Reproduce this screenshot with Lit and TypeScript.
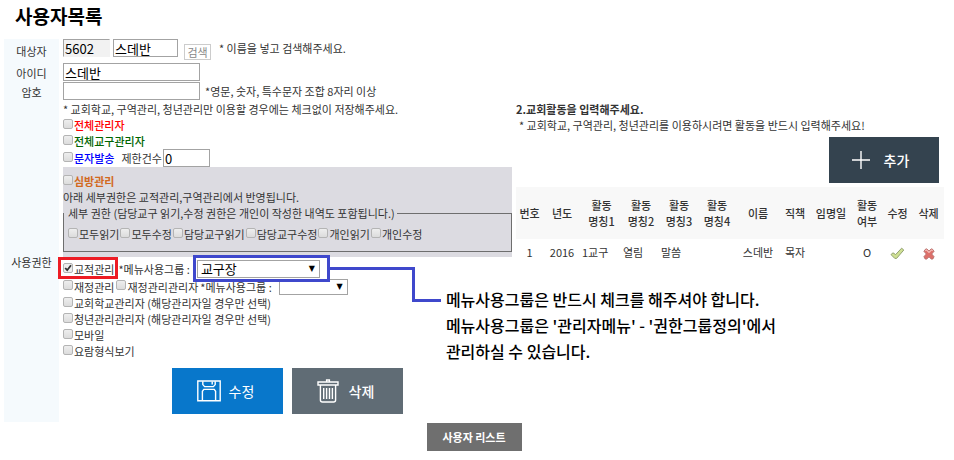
import { LitElement, html, css, svg, nothing } from "lit";
import { customElement } from "lit/decorators.js";

interface Column {
  lines: string[];
  share: number;
}

const COLUMNS: Column[] = [
  { lines: ["번호"], share: 27 },
  { lines: ["년도"], share: 38 },
  { lines: ["활동", "명칭1"], share: 41 },
  { lines: ["활동", "명칭2"], share: 38 },
  { lines: ["활동", "명칭3"], share: 38 },
  { lines: ["활동", "명칭4"], share: 38 },
  { lines: ["이름"], share: 44 },
  { lines: ["직책"], share: 30 },
  { lines: ["임명일"], share: 42 },
  { lines: ["활동", "여부"], share: 30 },
  { lines: ["수정"], share: 31 },
  { lines: ["삭제"], share: 31 },
];
const TOTAL = COLUMNS.reduce((sum, c) => sum + c.share, 0);

const ROWS = [
  { no: "1", year: "2016", acts: ["1교구", "열림", "말씀", ""], name: "스데반", role: "목자", date: "", active: "O" },
];

const DETAIL_RIGHTS = ["모두읽기", "모두수정", "담당교구읽기", "담당교구수정", "개인읽기", "개인수정"];

const saveIcon = svg`<svg width="24" height="22" viewBox="0 0 24 22" fill="none" stroke="#fff" stroke-width="1.4" aria-hidden="true">
  <path d="M.8 1H23.2V20.8H.8Z"/>
  <path d="M5.8 1.2V4.6L7.6 6.6H16.4L18.2 4.6V1.2M15.2 1.4V4.6"/>
  <path d="M5.4 20.6V11.2L6.8 9.4H17.2L18.6 11.2V20.6"/>
</svg>`;

const trashIcon = svg`<svg width="22" height="24" viewBox="0 0 22 24" fill="none" stroke="#fff" stroke-width="1.4" aria-hidden="true">
  <path d="M9.6 2.6V1H12.4V2.6M1 3H21V6H1Z"/>
  <path d="M3.4 6V21Q3.4 23 5.4 23H16.6Q18.6 23 18.6 21V6"/>
  <path d="M6.7 9V20M9.6 9V20M12.5 9V20M15.4 9V20"/>
</svg>`;

const plusIcon = svg`<svg width="20" height="20" viewBox="0 0 20 20" stroke="#fff" stroke-width="1.4" aria-hidden="true">
  <path d="M10 1V19M1 10H19"/>
</svg>`;

const checkIcon = svg`<svg width="15" height="13" viewBox="0 0 15 13" aria-hidden="true">
  <path d="M1 7.6 3 5.8 5.6 7.6 11.6 1.2 13.8 3 6.6 11.4H4.8Z" fill="#cfe093" stroke="#93a274" stroke-width="1"/>
</svg>`;

const crossIcon = svg`<svg width="12" height="12" viewBox="0 0 13 13" aria-hidden="true">
  <path d="M1 3.6 3 1H4.2L6.5 3.2 8.8 1H10L12 3.6 9.4 6.5 12 9.4 10.6 12H9L6.5 9.6 4 12H2.4L1 9.4 3.6 6.5Z" fill="#de6f69" stroke="#b5706c" stroke-width="1"/>
  <path d="M2.4 3 3.8 2.2 6.5 4.8 9.2 2.2 10.6 3" fill="none" stroke="#f3bab5" stroke-width="1.2"/>
</svg>`;

@customElement("app-root")
export class AppRoot extends LitElement {
  static styles = css`
    :host {
      display: block;
      padding: 4px 10px 8px 4px;
      background: #fff;
      color: #333;
      font: 11px/16px "Noto Sans CJK KR", "Noto Sans", sans-serif;
    }
    * { box-sizing: border-box; }
    h1 {
      margin: 0 0 11px 11px;
      color: #000;
      font-size: 19px;
      line-height: 24px;
      font-weight: 700;
    }
    h2, p { margin: 0; font-size: 11px; line-height: 16px; }
    button, input, select { font-family: inherit; margin: 0; }
    button { cursor: pointer; }

    .form {
      display: grid;
      grid-template-columns: 55px minmax(0, 1fr);
      column-gap: 4px;
    }
    .label {
      display: flex;
      align-items: center;
      justify-content: center;
      background: #f5fafd;
    }
    .field { display: flex; align-items: flex-start; padding-bottom: 1px; }
    .target { padding-bottom: 3px; height: 24px; }
    .target .note { margin-left: 8px; }
    .note { margin-left: 5px; line-height: 18px; }
    input.text {
      height: 18px;
      padding: 0 0 0 1px;
      border: 1px solid #a3a3a3;
      border-radius: 0;
      background: #fff;
      color: #000;
      font-size: 13px;
      line-height: 16px;
    }
    .num { width: 47px; }
    .name { width: 65px; margin-left: 3px; }
    .wide { width: 137px; }
    input.locked { background: #f2f2f2; border-right-color: #f2f2f2; border-bottom-color: #f2f2f2; }
    .search {
      width: 27px;
      height: 16px;
      margin: 5px 0 0 6px;
      padding: 0;
      border: 1px solid #ccc;
      background: #fff;
      color: #888;
      font-size: 11px;
      line-height: 14px;
    }

    .split {
      display: grid;
      grid-template-columns: minmax(0, 449fr) minmax(0, 428fr);
      column-gap: 4px;
      align-items: start;
      padding-bottom: 8px;
    }
    .line { display: flex; align-items: center; white-space: nowrap; }
    .check { display: flex; align-items: center; gap: 1px; }
    .check input {
      appearance: none;
      flex: none;
      width: 10px;
      height: 10px;
      margin-bottom: 3px;
      border: 1px solid #b4b4b4;
      border-radius: 2px;
      background: linear-gradient(#eee, #dcdcdc);
    }
    .check input:checked {
      background: url('data:image/svg+xml,<svg xmlns="http://www.w3.org/2000/svg" viewBox="0 0 8 8"><path d="M1.2 4 3.2 6.2 7 1.2" fill="none" stroke="%23333" stroke-width="1.8"/></svg>') center / 8px 8px, #eee;
    }
    .red { color: #f00; font-weight: 500; }
    .green { color: #006400; font-weight: 500; }
    .blue { color: #00f; font-weight: 500; }
    .orange { color: #d2691e; font-weight: 700; }
    .limit { display: flex; align-items: center; gap: 1px; margin-left: 7px; }

    .panel { padding: 6px 0 5px; background: #dcdbe1; }
    fieldset {
      min-width: 0;
      margin: 0;
      padding: 5px 0 9px;
      border: 1px solid #6e6e6e;
    }
    legend { padding: 0 2px 0 4px; }
    .rights { gap: 1px; padding-left: 4px; }

    .group { padding-top: 3px; gap: 4px; }
    .finance { gap: 2px; height: 17px; }
    .menu { display: flex; align-items: center; gap: 7px; }
    .pick { position: relative; display: flex; }
    .pick::after {
      content: "▼";
      position: absolute;
      right: 5px;
      top: 0;
      color: #000;
      font: 8px/18px "DejaVu Sans", sans-serif;
      pointer-events: none;
    }
    .pick select {
      appearance: none;
      width: 123px;
      height: 18px;
      padding: 0 3px;
      border: 1px solid #a3a3a3;
      border-radius: 0;
      background: #fff;
      color: #000;
      font-size: 13px;
      line-height: 16px;
    }
    .pick.small select { width: 69px; height: 16px; }
    .pick.small::after { line-height: 16px; }

    .marked { position: relative; }
    .marked::before {
      content: "";
      position: absolute;
      inset: -4px -4px -2px -5px;
      border: 3px solid #ed1c24;
    }
    .frame {
      position: absolute;
      z-index: 1;
      inset: -5px -10px -4px -4px;
      border: 3px solid #3f48cc;
      pointer-events: none;
    }
    .wire { position: absolute; left: 133px; top: 7px; }
    .callout {
      position: absolute;
      left: 249px;
      top: 26px;
      color: #000;
      font-size: 16px;
      line-height: 26px;
      font-weight: 500;
    }

    .actions { display: flex; justify-content: center; gap: 9px; margin-top: 9px; }
    .big {
      display: flex;
      align-items: center;
      justify-content: center;
      gap: 8px;
      width: 111px;
      height: 46px;
      padding: 0 4px 0 0;
      border: 0;
      color: #fff;
      font-size: 14px;
      line-height: 20px;
    }
    .save { background: #0877cb; }
    .delete { gap: 10px; background: #606c75; font-weight: 500; }
    .add { gap: 13px; width: 110px; padding-right: 8px; margin: 4px 5px 4px auto; background: #34434f; font-weight: 500; }
    .indent { padding-left: 3px; }

    table { width: 100%; border-collapse: collapse; table-layout: fixed; }
    th, td { padding: 0; text-align: center; white-space: nowrap; }
    th { height: 52px; background: #f8f8f8; font-weight: 500; }
    td { height: 26px; }
    td.act { text-align: left; padding-left: 1px; }
    .icon {
      display: inline-flex;
      padding: 0;
      border: 0;
      background: none;
      vertical-align: middle;
    }

    .footer { display: flex; justify-content: center; margin-top: 1px; }
    .list {
      width: 95px;
      height: 28px;
      padding: 0;
      border: 0;
      background: #6f6f6f;
      color: #fff;
      font-size: 11px;
      line-height: 16px;
      font-weight: 700;
    }
  `;

  private check(label: string, tone = "", checked = false) {
    return html`<label class="check"><input type="checkbox" ?checked=${checked}><span class=${tone || nothing}>${label}</span></label>`;
  }

  private permissions() {
    return html`
      <div>
        <p>* 교회학교, 구역관리, 청년관리만 이용할 경우에는 체크없이 저장해주세요.</p>
        <div class="line">${this.check("전체관리자", "red")}</div>
        <div class="line">${this.check("전체교구관리자", "green")}</div>
        <div class="line">
          ${this.check("문자발송", "blue")}
          <label class="limit">제한건수 <input class="text num" type="text" value="0"></label>
        </div>
        <div class="panel">
          <div class="line">${this.check("심방관리", "orange")}</div>
          <p>아래 세부권한은 교적관리,구역관리에서 반영됩니다.</p>
          <fieldset>
            <legend>세부 권한 (담당교구 읽기,수정 권한은 개인이 작성한 내역도 포함됩니다.)</legend>
            <div class="line rights">${DETAIL_RIGHTS.map((r) => this.check(r))}</div>
          </fieldset>
        </div>
        <div class="line group">
          <div class="marked">${this.check("교적관리", "", true)}</div>
          <div class="menu">
            <label for="menu-group">*메뉴사용그룹 :</label>
            <div class="pick">
              <select id="menu-group"><option>교구장</option></select>
              <div class="frame"></div>
              <svg class="wire" width="111" height="35" viewBox="0 0 111 35" fill="none" stroke="#3f48cc" stroke-width="3" aria-hidden="true">
                <path d="M0 1.5H83.5V33.5H111"/>
              </svg>
              <div class="callout">
                메뉴사용그룹은 반드시 체크를 해주셔야 합니다.<br>
                메뉴사용그룹은 '관리자메뉴' - '권한그룹정의'에서<br>
                관리하실 수 있습니다.
              </div>
            </div>
          </div>
        </div>
        <div class="line finance">
          ${this.check("재정관리")} ${this.check("재정관리관리자")}
          <div class="menu">
            <label for="finance-group">*메뉴사용그룹 :</label>
            <div class="pick small"><select id="finance-group"><option></option></select></div>
          </div>
        </div>
        <div class="line">${this.check("교회학교관리자 (해당관리자일 경우만 선택)")}</div>
        <div class="line">${this.check("청년관리관리자 (해당관리자일 경우만 선택)")}</div>
        <div class="line">${this.check("모바일")}</div>
        <div class="line">${this.check("요람형식보기")}</div>
        <div class="actions">
          <button type="button" class="big save">${saveIcon}수정</button>
          <button type="button" class="big delete">${trashIcon}삭제</button>
        </div>
      </div>
    `;
  }

  private activities() {
    return html`
      <div>
        <h2>2.교회활동을 입력해주세요.</h2>
        <p class="indent">* 교회학교, 구역관리, 청년관리를 이용하시려면 활동을 반드시 입력해주세요!</p>
        <button type="button" class="big add">${plusIcon}추가</button>
        <table>
          <colgroup>${COLUMNS.map((c) => html`<col style="width:${(c.share / TOTAL) * 100}%">`)}</colgroup>
          <thead>
            <tr>${COLUMNS.map((c) => html`<th scope="col">${c.lines.map((l, i) => html`${i ? html`<br>` : nothing}${l}`)}</th>`)}</tr>
          </thead>
          <tbody>
            ${ROWS.map((r) => html`<tr>
              <td>${r.no}</td>
              <td>${r.year}</td>
              ${r.acts.map((a) => html`<td class="act">${a}</td>`)}
              <td>${r.name}</td>
              <td>${r.role}</td>
              <td>${r.date}</td>
              <td>${r.active}</td>
              <td><button type="button" class="icon" aria-label="수정">${checkIcon}</button></td>
              <td><button type="button" class="icon" aria-label="삭제">${crossIcon}</button></td>
            </tr>`)}
          </tbody>
        </table>
      </div>
    `;
  }

  render() {
    return html`
      <h1>사용자목록</h1>
      <form class="form" @submit=${(e: Event) => e.preventDefault()}>
        <label class="label" for="target">대상자</label>
        <div class="field target">
          <input class="text num locked" type="text" value="5602" readonly aria-label="대상자 번호">
          <input class="text name" id="target" type="text" value="스데반">
          <button type="button" class="search">검색</button>
          <span class="note">* 이름을 넣고 검색해주세요.</span>
        </div>
        <label class="label" for="user-id">아이디</label>
        <div class="field"><input class="text wide" id="user-id" type="text" value="스데반"></div>
        <label class="label" for="password">암호</label>
        <div class="field">
          <input class="text wide" id="password" type="password">
          <span class="note">*영문, 숫자, 특수문자 조합 8자리 이상</span>
        </div>
        <div class="label">사용권한</div>
        <div class="split">${this.permissions()}${this.activities()}</div>
      </form>
      <div class="footer"><button type="button" class="list">사용자 리스트</button></div>
    `;
  }
}
